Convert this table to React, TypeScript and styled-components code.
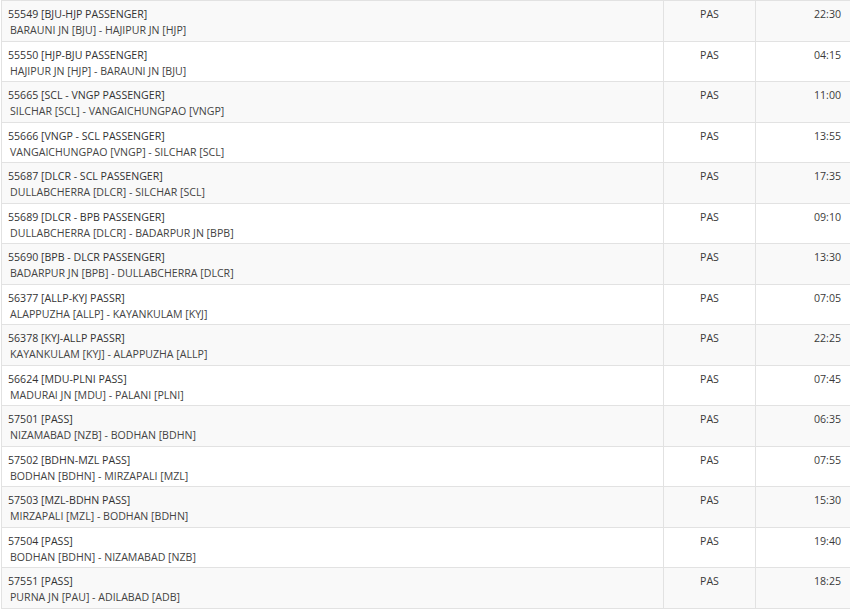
import React from 'react';
import styled, { createGlobalStyle } from 'styled-components';

const GlobalStyle = createGlobalStyle`
  body {
    margin: 0;
    background: #fff;
    font-family: "Open Sans", "Liberation Sans", sans-serif;
    overflow: hidden;
  }
`;

const Wrap = styled.div`
  padding: 0 0 0 1px;
  width: 900px;
`;

const Table = styled.table`
  border-collapse: collapse;
  width: 880px;
  table-layout: fixed;
  font-size: 10.6px;
  color: #3a3a3a;
`;

const Row = styled.tr<{ $shade: boolean }>`
  height: 40.5px;
  background: ${({ $shade }) => ($shade ? '#f9f9f9' : '#fff')};
`;

const Cell = styled.td<{ $align?: string }>`
  border: 1px solid #e2e2e2;
  vertical-align: top;
  padding: 5px 6px 0 6px;
  text-align: ${({ $align }) => $align || 'left'};
  line-height: 16px;
`;

const TimeCell = styled(Cell)`
  padding-left: 58px;
`;

const TrainName = styled.div`
  color: #333;
`;

const Route = styled.div`
  color: #444;
  padding-left: 2px;
`;

const trains = [
  ['55549 [BJU-HJP PASSENGER]', 'BARAUNI JN [BJU] - HAJIPUR JN [HJP]', '22:30'],
  ['55550 [HJP-BJU PASSENGER]', 'HAJIPUR JN [HJP] - BARAUNI JN [BJU]', '04:15'],
  ['55665 [SCL - VNGP PASSENGER]', 'SILCHAR [SCL] - VANGAICHUNGPAO [VNGP]', '11:00'],
  ['55666 [VNGP - SCL PASSENGER]', 'VANGAICHUNGPAO [VNGP] - SILCHAR [SCL]', '13:55'],
  ['55687 [DLCR - SCL PASSENGER]', 'DULLABCHERRA [DLCR] - SILCHAR [SCL]', '17:35'],
  ['55689 [DLCR - BPB PASSENGER]', 'DULLABCHERRA [DLCR] - BADARPUR JN [BPB]', '09:10'],
  ['55690 [BPB - DLCR PASSENGER]', 'BADARPUR JN [BPB] - DULLABCHERRA [DLCR]', '13:30'],
  ['56377 [ALLP-KYJ PASSR]', 'ALAPPUZHA [ALLP] - KAYANKULAM [KYJ]', '07:05'],
  ['56378 [KYJ-ALLP PASSR]', 'KAYANKULAM [KYJ] - ALAPPUZHA [ALLP]', '22:25'],
  ['56624 [MDU-PLNI PASS]', 'MADURAI JN [MDU] - PALANI [PLNI]', '07:45'],
  ['57501 [PASS]', 'NIZAMABAD [NZB] - BODHAN [BDHN]', '06:35'],
  ['57502 [BDHN-MZL PASS]', 'BODHAN [BDHN] - MIRZAPALI [MZL]', '07:55'],
  ['57503 [MZL-BDHN PASS]', 'MIRZAPALI [MZL] - BODHAN [BDHN]', '15:30'],
  ['57504 [PASS]', 'BODHAN [BDHN] - NIZAMABAD [NZB]', '19:40'],
  ['57551 [PASS]', 'PURNA JN [PAU] - ADILABAD [ADB]', '18:25'],
];

export default function App() {
  return (
    <Wrap>
      <GlobalStyle />
      <Table>
        <colgroup>
          <col style={{ width: 662 }} />
          <col style={{ width: 92 }} />
          <col style={{ width: 126 }} />
        </colgroup>
        <tbody>
          {trains.map(([name, route, time], i) => (
            <Row key={name} $shade={i % 2 === 0}>
              <Cell>
                <TrainName>{name}</TrainName>
                <Route>{route}</Route>
              </Cell>
              <Cell $align="center">PAS</Cell>
              <TimeCell>{time}</TimeCell>
            </Row>
          ))}
        </tbody>
      </Table>
    </Wrap>
  );
}
